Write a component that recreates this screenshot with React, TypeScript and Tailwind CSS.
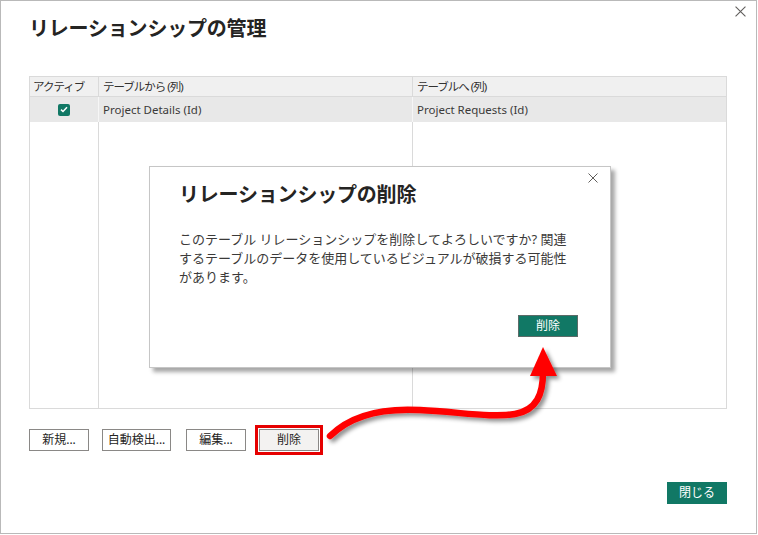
import React from "react";

const font = { fontFamily: '"Noto Sans", "Noto Sans CJK JP", sans-serif' };

function XIcon({ size, color }: { size: number; color: string }) {
  return (
    <svg width={size} height={size} viewBox="0 0 10 10">
      <path d="M0.5 0.5 L9.5 9.5 M9.5 0.5 L0.5 9.5" stroke={color} strokeWidth="1" fill="none" />
    </svg>
  );
}

export default function App() {
  return (
    <div
      className="relative w-[758px] h-[535px] bg-white overflow-hidden"
      style={font}
    >
      <div className="w-[757px] h-[534px] border border-[#b9b9b9] flex flex-col">
        {/* top row */}
        <div className="flex justify-between pl-[28px] pr-[10px]">
          <div className="mt-[14px] h-[28px] text-[20px] leading-[28px] font-bold text-[#252423] tracking-[-0.2px]">
            リレーションシップの管理
          </div>
          <div className="mt-[5px]">
            <XIcon size={11} color="#605e5c" />
          </div>
        </div>

        {/* table */}
        <div className="ml-[28px] mt-[33px] w-[698px] h-[333px] border border-[#dadada] grid grid-cols-[69px_314px_1fr] grid-rows-[20px_25px_1fr] text-[11.5px] text-[#323130]">
          <div className="bg-[#f0f0f0] border-r border-b border-[#dadada] pl-[3px] leading-[20px] whitespace-nowrap tracking-[-1px]">
            アクティブ
          </div>
          <div className="bg-[#f0f0f0] border-r border-b border-[#dadada] pl-[4px] leading-[20px] tracking-[-1px]">
            テーブルから (列)
          </div>
          <div className="bg-[#f0f0f0] border-b border-[#dadada] pl-[4px] leading-[20px] tracking-[-1px]">
            テーブルへ (列)
          </div>

          <div className="bg-[#e8e8e8] border-r border-[#f6f6f6] flex items-center justify-center">
            <div className="w-[12px] h-[12px] rounded-[2px] bg-[#117865] flex items-center justify-center">
              <svg width="8" height="7" viewBox="0 0 8 7">
                <path d="M1 3.6 L3 5.5 L7 1.2" stroke="white" strokeWidth="1.5" fill="none" />
              </svg>
            </div>
          </div>
          <div className="bg-[#e8e8e8] border-r border-[#f6f6f6] pl-[4px] leading-[25px] text-[#3b3a39]">
            Project Details (Id)
          </div>
          <div className="bg-[#e8e8e8] pl-[4px] leading-[25px] text-[#3b3a39]">
            Project Requests (Id)
          </div>

          <div className="border-r border-[#dadada]" />
          <div className="border-r border-[#dadada]" />
          <div />
        </div>

        {/* buttons */}
        <div className="ml-[28px] mt-[16px] flex items-center text-[12px] text-[#252423]">
          <button className="w-[60px] h-[22px] border border-[#8a8886] bg-white leading-[20px]">
            新規...
          </button>
          <button className="ml-[13px] w-[69px] h-[22px] border border-[#8a8886] bg-white leading-[20px]">
            自動検出...
          </button>
          <button className="ml-[15px] w-[60px] h-[22px] border border-[#8a8886] bg-white leading-[20px]">
            編集...
          </button>
          <div className="ml-[9px] border-[3px] border-[#e60000] p-px">
            <button className="w-[60px] h-[22px] border border-[#8a8886] bg-[#f3f2f1] leading-[20px]">
              削除
            </button>
          </div>
        </div>

        {/* close */}
        <div className="ml-[28px] w-[698px] mt-[27px] flex justify-end">
          <button className="w-[60px] h-[22px] bg-[#117865] text-white text-[12px] leading-[22px]">
            閉じる
          </button>
        </div>
      </div>

      {/* modal overlay */}
      <div className="absolute left-[149px] top-[166px] w-[462px] h-[202px] bg-white border border-[#c6c6c6] shadow-[4px_4px_4px_rgba(0,0,0,0.35)] flex flex-col">
        <div className="flex justify-between pl-[29px] pr-[12px]">
          <div className="mt-[14px] h-[28px] text-[20px] leading-[28px] font-bold text-[#252423] tracking-[-0.2px]">
            リレーションシップの削除
          </div>
          <div className="mt-[6px]">
            <XIcon size={10} color="#605e5c" />
          </div>
        </div>
        <div className="pl-[29px] mt-[21px] text-[13px] leading-[19px] text-[#3b3a39] whitespace-nowrap">
          <div>このテーブル リレーションシップを削除してよろしいですか? 関連</div>
          <div>するテーブルのデータを使用しているビジュアルが破損する可能性</div>
          <div>があります。</div>
        </div>
        <div className="mt-auto mb-[30px] pr-[32px] flex justify-end">
          <button className="w-[60px] h-[22px] bg-[#117865] border border-[#5c6b68] text-white text-[12px] leading-[20px]">
            削除
          </button>
        </div>
      </div>

      {/* red arrow overlay */}
      <svg className="absolute left-0 top-0 pointer-events-none" width="758" height="535">
        <defs>
          <filter id="sh" x="-20%" y="-20%" width="140%" height="140%">
            <feDropShadow dx="3" dy="3" stdDeviation="2" floodColor="#000" floodOpacity="0.45" />
          </filter>
        </defs>
        <g filter="url(#sh)">
          <path
            d="M330 436 C352 414 385 408 420 410 C460 412 492 418 515 414 C537 410 543 394 543 372"
            stroke="#ff0000"
            strokeWidth="6.5"
            strokeLinecap="round"
            fill="none"
          />
          <polygon points="543,347 530,376 557,376" fill="#ff0000" />
        </g>
      </svg>
    </div>
  );
}
